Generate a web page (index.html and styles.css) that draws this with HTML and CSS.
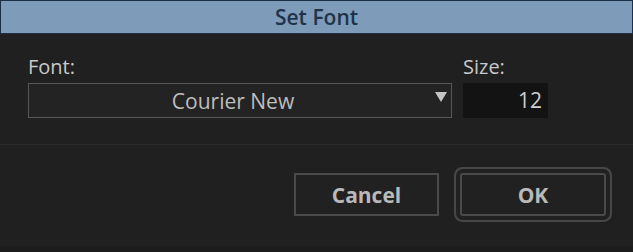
FILE: index.html
```html
<!DOCTYPE html>
<html>
<head>
    <title>Set Font</title>
    <meta name="viewport" content="width=device-width, initial-scale=1.0">
    <link rel="stylesheet" href="styles.css">
</head>

<body>
    <div class="dialog">
        <div class="titlebar">Set Font</div>

        <div class="fields">
            <div class="field font-field">
                <label class="field-label">Font:</label>
                <div class="combo">
                    <span class="combo-value">Courier New</span>
                    <svg class="combo-arrow" width="12" height="10" viewBox="0 0 12 10">
                        <path d="M0 0 L12 0 L6 10 Z" fill="#c4c4c4"/>
                    </svg>
                </div>
            </div>
            <div class="field size-field">
                <label class="field-label">Size:</label>
                <div class="size-input">12</div>
            </div>
        </div>

        <div class="buttons">
            <button type="button" class="btn">Cancel</button>
            <button type="button" class="btn btn-default">OK</button>
        </div>
    </div>
</body>
</html>
```

FILE: styles.css
```css
body {
    margin: 0;
    width: 633px;
    height: 252px;
    background: #1b1b1b;
    overflow: hidden;
    font-family: "Open Sans", "Noto Sans", sans-serif;
}

.dialog {
    display: flex;
    flex-direction: column;
    width: 633px;
    height: 252px;
    box-sizing: border-box;
    background: #202020;
    border-bottom: 6px solid #1c1c1c;
}

.titlebar {
    height: 32px;
    border: 1px solid #1c2f46;
    background: #7e9cb9;
    color: #1f334b;
    font-size: 21px;
    font-weight: 600;
    line-height: 32px;
    text-align: center;
}

.fields {
    display: flex;
    gap: 11px;
    padding: 19px 28px 0 28px;
    height: 111px;
    box-sizing: border-box;
    border-bottom: 1px solid #2b2b2b;
}

.field {
    display: flex;
    flex-direction: column;
}

.font-field {
    width: 424px;
}

.size-field {
    width: 85px;
}

.field-label {
    color: #c9c9c9;
    font-size: 20px;
    line-height: 28px;
    height: 30px;
}

.combo {
    display: flex;
    align-items: center;
    height: 35px;
    box-sizing: border-box;
    border: 1px solid #575757;
    background: #232323;
    padding: 0 4px 0 0;
}

.combo-value {
    flex: 1;
    text-align: center;
    color: #bdbdbd;
    font-size: 21px;
    padding-left: 2px;
}

.combo-arrow {
    margin-bottom: 8px;
}

.size-input {
    height: 35px;
    box-sizing: border-box;
    background: #131313;
    color: #cfcfcf;
    font-size: 21px;
    line-height: 35px;
    text-align: right;
    padding-right: 6px;
}

.buttons {
    display: flex;
    justify-content: flex-end;
    gap: 21px;
    padding: 28px 27px 0 0;
}

.btn {
    width: 145px;
    height: 43px;
    box-sizing: border-box;
    border: 2px solid #4a4a4a;
    border-radius: 1px;
    background: #212121;
    color: #b9b9b9;
    font-family: "Open Sans", "Noto Sans", sans-serif;
    font-size: 21px;
    font-weight: 700;
    padding: 0;
}

.btn-default {
    width: 146px;
    box-shadow: 0 0 0 4px #212121, 0 0 0 6px #474747;
    border-radius: 3px;
}
```
